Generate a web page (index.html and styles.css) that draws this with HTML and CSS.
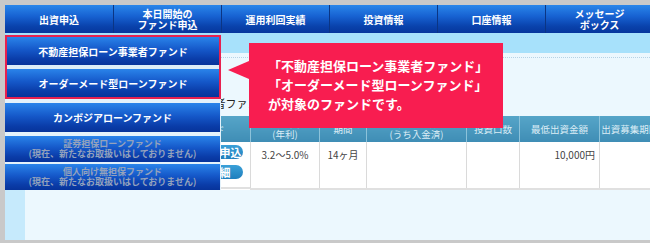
FILE: index.html
```html
<!DOCTYPE html>
<html lang="ja">
<head>
    <meta charset="UTF-8">
    <meta name="viewport" content="width=device-width, initial-scale=1.0">
    <title>ファンド一覧 - メニュー</title>
    <link rel="stylesheet" href="styles.css">
</head>
<body>
    <div class="frame">
        <nav class="global-nav">
            <a href="#" class="nav-item">出資申込</a>
            <a href="#" class="nav-item">本日開始の<br>ファンド申込</a>
            <a href="#" class="nav-item">運用利回実績</a>
            <a href="#" class="nav-item">投資情報</a>
            <a href="#" class="nav-item">口座情報</a>
            <a href="#" class="nav-item">メッセージ<br>ボックス</a>
        </nav>

        <div class="sub-bar"></div>

        <div class="main">
            <div class="side-strip"></div>
            <div class="content">
                <div class="dotted-rule"></div>
                <h2 class="page-title">不動産担保ローン事業者ファンド 一覧</h2>

                <table class="fund-table">
                    <colgroup>
                        <col style="width: 90px">
                        <col style="width: 69px">
                        <col style="width: 47px">
                        <col style="width: 100px">
                        <col style="width: 53px">
                        <col style="width: 80px">
                        <col style="width: 60px">
                    </colgroup>
                    <thead>
                        <tr>
                            <th>ファンド</th>
                            <th>予定利回り<br>(年利)</th>
                            <th>期間</th>
                            <th>募集金額<br>(うち入金済)</th>
                            <th>投資口数</th>
                            <th>最低出資金額</th>
                            <th>出資募集期間</th>
                        </tr>
                    </thead>
                    <tbody>
                        <tr>
                            <td class="cell-actions">
                                <a href="#" class="pill">出資申込</a>
                                <a href="#" class="pill">詳細</a>
                            </td>
                            <td class="cell-center">3.2〜5.0%</td>
                            <td class="cell-center">14ヶ月</td>
                            <td></td>
                            <td></td>
                            <td class="cell-right">10,000円</td>
                            <td></td>
                        </tr>
                    </tbody>
                </table>
            </div>
        </div>

        <!-- menu opened from 出資申込 -->
        <div class="dropdown">
            <div class="dropdown-group">
                <a href="#" class="dropdown-item">不動産担保ローン事業者ファンド</a>
                <a href="#" class="dropdown-item">オーダーメード型ローンファンド</a>
            </div>
            <a href="#" class="dropdown-item item-cambodia">カンボジアローンファンド</a>
            <a href="#" class="dropdown-item item-closed">証券担保ローンファンド<br>(現在、新たなお取扱いはしておりません)</a>
            <a href="#" class="dropdown-item item-closed item-last">個人向け無担保ファンド<br>(現在、新たなお取扱いはしておりません)</a>
        </div>

        <div class="callout">
            「不動産担保ローン事業者ファンド」<br>
            「オーダーメード型ローンファンド」<br>
            が対象のファンドです。
        </div>
    </div>
</body>
</html>
```

FILE: styles.css
```css
:root {
    --frame-gray: #c9c9c9;
    --sub-blue: #a7e1fb;
    --strip-blue: #c6eafc;
    --page-bg: #ecf8fe;
    --callout-red: #f81d50;
    --menu-red: #e8204f;
    --white: #FFFFFF;
}

* {
    box-sizing: border-box;
    margin: 0;
    padding: 0;
}

body {
    width: 650px;
    height: 246px;
    overflow: hidden;
    background-color: var(--white);
    font-family: "Noto Sans CJK JP", "Noto Sans", sans-serif;
    color: #333;
}

.frame {
    position: relative;
    height: 243px;
    border-top: 5px solid var(--frame-gray);
    border-left: 5px solid var(--frame-gray);
    border-bottom: 3px solid var(--frame-gray);
    overflow: hidden;
}

/* ---- navigation ---- */
.global-nav {
    display: grid;
    grid-template-columns: repeat(6, 108px);
    height: 28px;
    background: linear-gradient(to bottom, #2a86ea 0%, #1762d2 40%, #0a43ad 75%, #06369c 100%);
}

.nav-item {
    display: flex;
    align-items: center;
    justify-content: center;
    text-align: center;
    color: var(--white);
    text-decoration: none;
    font-size: 10px;
    font-weight: 700;
    line-height: 11px;
}

.nav-item + .nav-item {
    border-left: 1px solid #0b3584;
}

.sub-bar {
    height: 20px;
    background-color: var(--sub-blue);
}

.main {
    display: flex;
    height: 187px;
}

.side-strip {
    width: 20px;
    background-color: var(--strip-blue);
}

.content {
    flex: 1;
    background-color: var(--page-bg);
    overflow: hidden;
}

.dotted-rule {
    height: 5px;
    border-bottom: 1px dotted #b6d3e6;
}

.page-title {
    margin-top: 37px;
    padding-left: 80px;
    font-size: 11px;
    font-weight: 400;
    line-height: 16px;
    color: #222;
    white-space: nowrap;
}

/* ---- fund table ---- */
.fund-table {
    margin: 5px 0 0 135px;
    width: 499px;
    table-layout: fixed;
    border-collapse: collapse;
    background-color: var(--white);
}

.fund-table th {
    height: 26px;
    background: linear-gradient(to bottom, #56a5c8, #3f8db5);
    color: #dcedf6;
    font-size: 9.5px;
    font-weight: 400;
    line-height: 11px;
    border-left: 1px solid #8cc2da;
    white-space: nowrap;
    overflow: hidden;
}

.fund-table td {
    height: 47px;
    vertical-align: top;
    padding-top: 7px;
    font-size: 10px;
    line-height: 12px;
    color: #444;
    border-left: 1px solid #dadada;
    border-bottom: 2px solid #e0e0e0;
}

.cell-center {
    text-align: center;
}

.cell-right {
    text-align: right;
    padding-right: 4px;
}

.fund-table td.cell-actions {
    padding: 3px 7px 0 0;
    display: flex;
    flex-direction: column;
    align-items: flex-end;
    gap: 6px;
    border-left: none;
}

.pill {
    display: block;
    width: 47px;
    height: 14px;
    border-radius: 7px;
    background: linear-gradient(to bottom, #3aa0d8, #1f7fbd);
    color: var(--white);
    font-size: 11px;
    font-weight: 700;
    line-height: 14px;
    text-align: center;
    text-decoration: none;
}

/* ---- dropdown menu ---- */
.dropdown {
    position: absolute;
    top: 30px;
    left: 0;
    width: 216px;
    background-color: #e4f2fb;
    display: flex;
    flex-direction: column;
}

.dropdown-group {
    display: flex;
    flex-direction: column;
    gap: 4px;
    border: 2px solid var(--menu-red);
    background-color: #dcecf7;
}

.dropdown-item {
    display: flex;
    align-items: center;
    justify-content: center;
    height: 28px;
    text-align: center;
    text-decoration: none;
    color: var(--white);
    font-size: 10px;
    font-weight: 700;
    background: linear-gradient(to bottom, #2a84ea 0%, #1558c9 45%, #0a3ca8 80%, #07339a 100%);
}

.item-cambodia {
    width: 215px;
    height: 29px;
    margin-top: 4px;
}

.item-closed {
    width: 215px;
    height: 26px;
    margin-top: 4px;
    font-size: 9px;
    line-height: 10.5px;
    color: #94a2bc;
}

.item-last {
    margin-top: 2px;
}

/* ---- callout ---- */
.callout {
    position: absolute;
    top: 38px;
    left: 244px;
    width: 254px;
    height: 85px;
    padding: 13px 0 0 19px;
    background-color: var(--callout-red);
    color: var(--white);
    font-size: 13px;
    font-weight: 700;
    line-height: 19px;
    white-space: nowrap;
}

.callout::before {
    content: '';
    position: absolute;
    top: 18px;
    left: -21px;
    border-right: 21px solid var(--callout-red);
    border-top: 9px solid transparent;
    border-bottom: 9px solid transparent;
}
```
